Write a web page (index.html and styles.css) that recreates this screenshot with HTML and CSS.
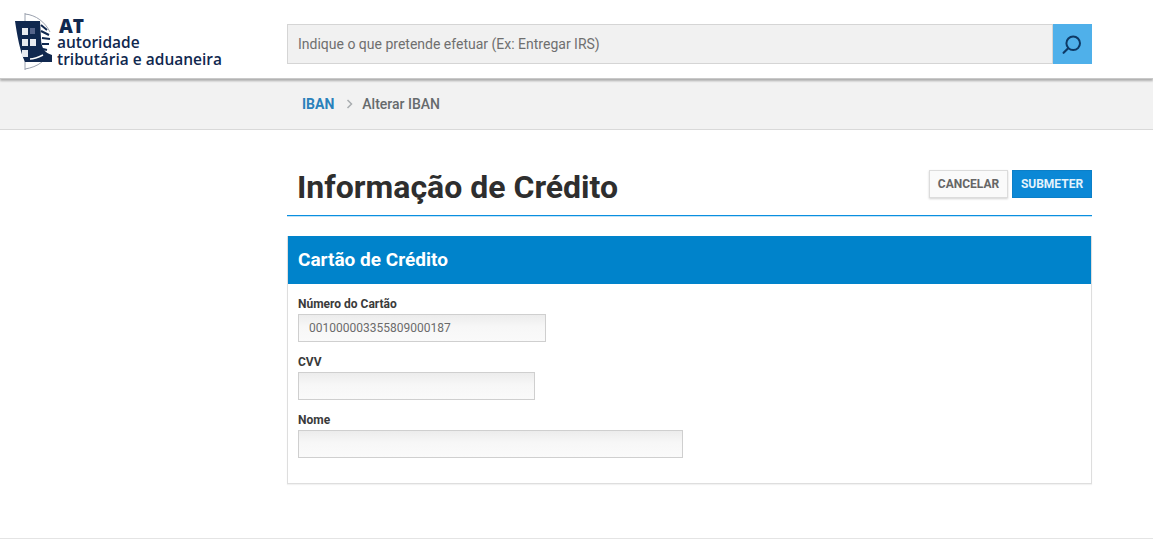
FILE: index.html
```html
<!DOCTYPE html>
<html lang="pt">
<head>
<meta charset="utf-8">
<title>Informação de Crédito</title>
<link rel="stylesheet" href="styles.css">
</head>
<body>
<header class="topbar">
  <a class="logo">
    <svg class="emblem" width="40" height="58" viewBox="0 0 40 58">
      <path d="M11 0 V57" fill="none" stroke="#9aa1ae" stroke-width="1"/>
      <path d="M11 1 C22 2 31 9 36 19" fill="none" stroke="#9aa1ae" stroke-width="1"/>
      <path d="M11 56 C17 55 23 53 28 49" fill="none" stroke="#9aa1ae" stroke-width="1"/>
      <path d="M1 8 H26 L27 25 C27 35 31 40 38 42 V49 H11 C6 38 3 22 1 8Z" fill="#10284f"/>
      <rect x="8" y="15" width="6" height="7" fill="#e8ebf0"/>
      <rect x="8" y="26" width="6" height="7" fill="#e8ebf0"/>
      <rect x="16" y="26" width="6" height="7" fill="#e8ebf0"/>
      <rect x="8" y="37" width="6" height="7" fill="#e8ebf0"/>
      <rect x="16" y="15" width="5" height="6" fill="#55648a"/>
      <path d="M27 12 L33 17 M27 18 L35 22 M28 25 L36 26 M28 31 L35 31 M29 36 L33 37" stroke="#10284f" stroke-width="2"/>
      <path d="M16 46 C21 46 25 44 29 42" fill="none" stroke="#fff" stroke-width="1.6"/>
    </svg>
    <span class="logo-text">
      <span class="logo-at">AT</span>
      <span>autoridade</span>
      <span>tributária e aduaneira</span>
    </span>
  </a>
  <form class="search">
    <div class="search-input">Indique o que pretende efetuar (Ex: Entregar IRS)</div>
    <button class="search-btn" type="button" aria-label="Pesquisar">
      <svg width="24" height="24" viewBox="0 0 24 24" fill="none" stroke="#0e3a66">
        <circle cx="12.2" cy="11.3" r="6.8" stroke-width="2"/>
        <path d="M7.2 16.3 L2.6 20.8" stroke-width="2.2" stroke-linecap="round"/>
      </svg>
    </button>
  </form>
</header>

<nav class="crumbs">
  <div class="crumbs-inner">
    <a class="crumb-link">IBAN</a>
    <svg class="crumb-sep" width="7" height="10" viewBox="0 0 7 10" fill="none" stroke="#a9adb0" stroke-width="1.5"><path d="M1.5 1 L5.5 5 L1.5 9"/></svg>
    <span class="crumb-current">Alterar IBAN</span>
  </div>
</nav>

<main class="content">
  <div class="title-row">
    <h1>Informação de Crédito</h1>
    <div class="actions">
      <button class="btn btn-default" type="button">CANCELAR</button>
      <button class="btn btn-primary" type="button">SUBMETER</button>
    </div>
  </div>
  <section class="panel">
    <h2 class="panel-head">Cartão de Crédito</h2>
    <div class="panel-body">
      <div class="field">
        <label>Número do Cartão</label>
        <div class="input w-card">001000003355809000187</div>
      </div>
      <div class="field">
        <label>CVV</label>
        <div class="input w-cvv"></div>
      </div>
      <div class="field">
        <label>Nome</label>
        <div class="input w-name"></div>
      </div>
    </div>
  </section>
</main>
<footer class="foot"></footer>
</body>
</html>
```

FILE: styles.css
```css
* { box-sizing: border-box; }
html, body { margin: 0; padding: 0; }
body {
  width: 1153px;
  height: 539px;
  overflow: hidden;
  background: #fff;
  font-family: Roboto, "Liberation Sans", sans-serif;
  color: #333;
  display: flex;
  flex-direction: column;
}
.topbar {
  height: 79px;
  flex: none;
  display: flex;
  align-items: flex-start;
  background: #fff;
  border-bottom: 1px solid #c9c9c9;
  box-shadow: 0 2px 2px rgba(0,0,0,.28);
  position: relative;
}
.logo {
  width: 287px;
  flex: none;
  display: flex;
  padding: 13px 0 0 14px;
}
.emblem { flex: none; display: block; }
.logo-text {
  display: flex;
  flex-direction: column;
  margin: 5px 0 0 3px;
  font-family: "Open Sans", sans-serif;
  font-weight: 600;
  font-size: 15.5px;
  line-height: 17px;
  color: #10284f;
  white-space: nowrap;
}
.logo-at {
  font-size: 19px;
  font-weight: 800;
  line-height: 16px;
  margin-left: 2px;
}
.search {
  display: flex;
  width: 805px;
  height: 40px;
  margin-top: 24px;
}
.search-input {
  flex: 1;
  background: #f1f1f1;
  border: 1px solid #d5d5d5;
  padding-left: 10px;
  font-size: 14px;
  line-height: 38px;
  color: #6f6f6f;
}
.search-btn {
  width: 39px;
  flex: none;
  border: 0;
  padding: 0;
  background: #4fb0ea;
  display: flex;
  align-items: center;
  justify-content: center;
}
.crumbs {
  height: 51px;
  flex: none;
  background: #f2f2f2;
  border-bottom: 1px solid #d9d9d9;
}
.crumbs-inner {
  margin-left: 302px;
  height: 50px;
  display: flex;
  align-items: center;
  font-size: 14px;
  font-weight: 500;
}
.crumb-link { color: #2a81bb; font-weight: 700; }
.crumb-sep { margin: 0 9px 0 12px; }
.crumb-current { color: #666a6c; }
.content {
  width: 805px;
  margin-left: 287px;
  flex: none;
}
.title-row {
  height: 86px;
  display: flex;
  justify-content: space-between;
  align-items: flex-start;
  border-bottom: 1px solid #0a8fe0;
  box-shadow: 0 1px 0 rgba(10,143,224,.25);
  padding-top: 40px;
}
h1 {
  margin: -1px 0 0 10px;
  font-size: 32px;
  line-height: 36px;
  font-weight: 700;
  color: #2e2e2e;
}
.actions { display: flex; gap: 4px; }
.btn {
  height: 28px;
  padding: 0;
  font-family: Roboto, "Liberation Sans", sans-serif;
  font-size: 12px;
  font-weight: 700;
}
.btn-default {
  width: 79px;
  background: #fafafa;
  color: #666;
  border: 1px solid #dcdcdc;
  box-shadow: 0 1px 2px rgba(0,0,0,.18);
}
.btn-primary {
  width: 80px;
  background: #0b88d6;
  color: #e4f3fc;
  border: 1px solid #0b7fc8;
}
.panel {
  margin-top: 20px;
  height: 248px;
  border: 1px solid #dedede;
  border-top: 0;
  box-shadow: 0 1px 1px rgba(0,0,0,.05);
}
.panel-head {
  height: 48px;
  margin: 0;
  padding-left: 10px;
  background: #0083cb;
  color: #fff;
  font-size: 19px;
  font-weight: 700;
  line-height: 47px;
}
.panel-body { padding: 11px 0 0 10px; }
.field { height: 58px; }
label {
  display: block;
  height: 19px;
  font-size: 12px;
  line-height: 19px;
  font-weight: 700;
  color: #3a3a3a;
}
.input {
  height: 28px;
  border: 1px solid #cfcfcf;
  background: linear-gradient(#ececec, #f7f7f7 45%, #fafafa);
  font-size: 12px;
  line-height: 26px;
  padding-left: 10px;
  color: #6b6b6b;
}
.w-card { width: 248px; }
.w-cvv { width: 237px; }
.w-name { width: 385px; }
.foot {
  margin-top: 54px;
  border-top: 1px solid #e4e4e4;
  height: 1px;
  flex: none;
}
```
